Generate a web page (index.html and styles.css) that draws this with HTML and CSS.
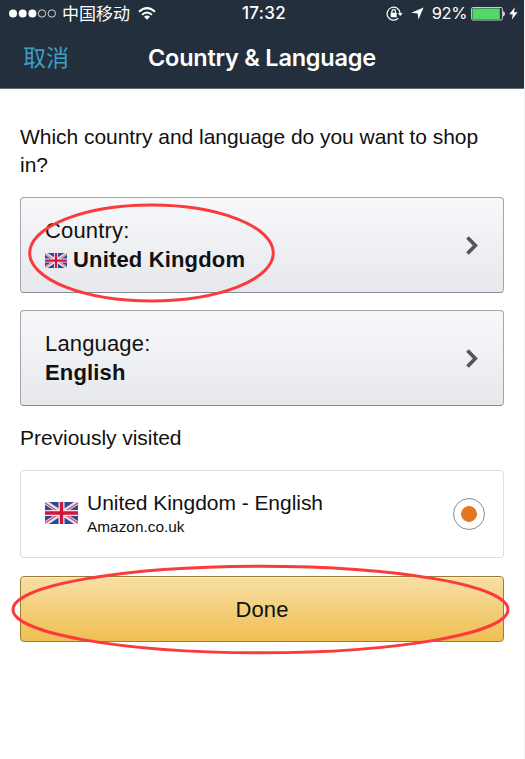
FILE: index.html
```html
<!DOCTYPE html>
<html lang="en">
<head>
<meta charset="utf-8">
<title>Country &amp; Language</title>
<link rel="stylesheet" href="styles.css">
</head>
<body>
<svg class="defs" width="0" height="0" aria-hidden="true">
  <symbol id="uk" viewBox="0 0 60 40" preserveAspectRatio="none">
    <path fill="#2b4a9b" d="M0 0h60v40H0z"/>
    <path stroke="#e9e2ee" stroke-width="8" d="M0 0l60 40M60 0L0 40"/>
    <path stroke="#dc5570" stroke-width="2.500" d="M0 1.500l30 20M60 38.500l-30-20M60 1.500l-30 20M0 38.500l30-20"/>
    <path stroke="#f3dfe6" stroke-width="11" d="M30 0v40M0 20h60"/>
    <path stroke="#d5143a" stroke-width="6" d="M30 0v40M0 20h60"/>
  </symbol>
</svg>
<div class="screen">
  <header class="header">
    <div class="status">
      <div class="status-left">
        <svg class="signal" width="48" height="12" viewBox="0 0 48 12"><g fill="#fff"><circle cx="4" cy="5.500" r="4"/><circle cx="13.700" cy="5.500" r="4"/><circle cx="23.400" cy="5.500" r="4"/></g><g fill="none" stroke="#fff" stroke-width=".8"><circle cx="33" cy="5.500" r="3.700"/><circle cx="42.800" cy="5.500" r="3.700"/></g></svg>
        <span class="carrier">中国移动</span>
        <svg class="wifi" width="18" height="14" viewBox="0 0 18 14"><g fill="none" stroke="#fff" stroke-width="2"><path d="M1 4.700Q9-2.500 17 4.700M4 7.800Q9 3.300 14 7.800"/></g><path fill="#fff" d="M6 9.700Q9 7.300 12 9.700L9 12.700z"/></svg>
      </div>
      <span class="time">17:32</span>
      <div class="status-right">
        <svg class="lock" width="17" height="16" viewBox="0 0 17 16"><path fill="none" stroke="#fff" stroke-width="1.200" d="M14.100 7.200A6.500 6.500 0 1 0 12.300 12.200"/><path fill="#fff" d="M11.700 7h5L14.200 10zM4.700 6.700h6v4.500h-6z"/><path fill="none" stroke="#fff" stroke-width="1.200" d="M5.900 7V5.500a1.800 1.800 0 0 1 3.600 0V7"/></svg>
        <svg class="arrow" width="13" height="13" viewBox="0 0 13 13"><path fill="#fff" d="M12.600.4L7.400 12.600 6.700 6.500.3 5.700z"/></svg>
        <span class="percent">92%</span>
        <svg class="battery" width="34" height="14" viewBox="0 0 34 14"><rect x=".6" y=".5" width="30.800" height="12.500" rx="1.200" fill="none" stroke="#c9cdd3" stroke-width="1"/><path fill="#53d769" d="M1.500 1.400h27.300v10.600H1.500z"/><path fill="#fff" d="M32.200 4.100q1.600.4 1.600 2.700t-1.600 2.700z"/></svg>
        <svg class="bolt" width="9" height="13" viewBox="0 0 9 13"><path fill="#fff" d="M5.800.2L.3 7.200h3.500L2.800 12.800 8.600 5.300H5z"/></svg>
      </div>
    </div>
    <nav class="nav"><span class="cancel">取消</span><h1 class="title">Country &amp; Language</h1></nav>
  </header>
  <main class="content">
    <p class="question">Which country and language do you want to shop in?</p>
    <div class="picker">
      <div>
        <div class="label">Country:</div>
        <div class="value"><svg class="flag-small" width="22" height="15"><use href="#uk"/></svg><span class="country">United Kingdom</span></div>
      </div>
      <svg class="chevron" width="12" height="20" viewBox="0 0 12 20"><path fill="none" stroke="#555" stroke-width="3.700" d="M1.500 2.500l7.800 8-7.800 8"/></svg>
      <svg class="mark mark-country" width="248" height="102"><ellipse cx="124.500" cy="51" rx="121.800" ry="48"/></svg>
    </div>
    <div class="picker">
      <div>
        <div class="label">Language:</div>
        <div class="value"><span class="language">English</span></div>
      </div>
      <svg class="chevron" width="12" height="20" viewBox="0 0 12 20"><path fill="none" stroke="#555" stroke-width="3.700" d="M1.500 2.500l7.800 8-7.800 8"/></svg>
    </div>
    <h2 class="section">Previously visited</h2>
    <div class="visited">
      <svg class="flag-large" width="33" height="22"><use href="#uk"/></svg>
      <div class="store">
        <div class="store-name">United Kingdom - English</div>
        <div class="store-url">Amazon.co.uk</div>
      </div>
      <span class="radio"></span>
    </div>
    <div class="done"><span>Done</span>
      <svg class="mark mark-done" width="500" height="92"><ellipse cx="249.500" cy="45.500" rx="247.500" ry="43.300"/></svg>
    </div>
  </main>
</div>
</body>
</html>
```
FILE: styles.css
```css
* { box-sizing: border-box; }
body {
  margin: 0;
  background: #fff;
  color: #111;
  font-family: "Liberation Sans", Arial, sans-serif;
}
.defs { position: absolute; }
.screen { width: 525px; height: 759px; border-right: 1px solid #f0f2f7; overflow: hidden; }
svg { display: block; flex: none; }

.header { height: 89px; background: #242f3d; border-bottom: 1px solid #66707d; color: #fff; }
.status {
  height: 27px;
  display: grid;
  grid-template-columns: 1fr auto 1fr;
  align-items: center;
  padding: 0 6px 0 9px;
  font: 17px/27px Inter, "Noto Sans CJK SC", sans-serif;
}
.status-left, .status-right { display: flex; align-items: center; }
.status-right { justify-content: flex-end; }
.carrier { margin-left: 5px; padding-bottom: 2px; font: 400 17px/25px "Noto Sans CJK SC", sans-serif; }
.wifi { margin-left: 8px; }
.time { padding-left: 1px; font-weight: 500; font-size: 17px; letter-spacing: .3px; }
.lock { margin-right: -1px; }
.arrow { margin-left: 9px; }
.percent { margin-left: 8px; font-size: 16.500px; letter-spacing: -.4px; }
.battery { margin-left: 4px; }
.bolt { margin-left: 4px; }
.nav {
  height: 61px;
  display: grid;
  grid-template-columns: 125px 1fr;
  align-items: center;
  padding-left: 23px;
}
.cancel { padding-bottom: 3px; color: #419cc4; font: 400 23px/33px "Noto Sans CJK SC", sans-serif; }
.title { margin: 0; font: 600 23.500px/36px Inter, sans-serif; letter-spacing: -.23px; white-space: nowrap; }

.content { padding: 34px 20px 0; }
.question { margin: 0 0 18px; font-size: 21px; line-height: 28px; letter-spacing: -.04px; }
.picker {
  position: relative;
  height: 96px;
  margin-bottom: 17px;
  padding: 0 25px 0 24px;
  display: flex;
  align-items: center;
  justify-content: space-between;
  border: 1px solid #a3a6ad;
  border-bottom-color: #868b95;
  border-radius: 4px;
  background: linear-gradient(#f7f8fa, #e7e8ec);
  font-size: 22px;
  line-height: 29px;
  letter-spacing: .16px;
}
.value { display: flex; align-items: center; font-weight: bold; }
.flag-small { margin: 1px 6px 0 0; }
.mark { position: absolute; fill: none; stroke: #fb3a3c; stroke-width: 3px; }
.mark-country { left: 6px; top: 4px; }
.section { margin: 0 0 17px; font-size: 21px; font-weight: normal; line-height: 30px; letter-spacing: -.04px; }
.visited {
  height: 88px;
  margin-bottom: 18px;
  padding: 0 18px 0 24px;
  display: flex;
  align-items: center;
  border: 1px solid #ddd;
  border-radius: 4px;
}
.flag-large { margin-bottom: 2px; }
.store { margin: 2px 0 0 9px; }
.store-name { font-size: 21px; line-height: 24px; letter-spacing: -.04px; }
.store-url { font-size: 15.400px; line-height: 24px; }
.radio {
  width: 32px;
  height: 32px;
  margin-left: auto;
  border: 1px solid #8c8c8c;
  border-radius: 50%;
  background: radial-gradient(circle, #e47620 7.500px, #fff 8.200px);
}
.done {
  position: relative;
  height: 66px;
  padding-top: 1px;
  display: flex;
  align-items: center;
  justify-content: center;
  border: 1px solid #9b7c35;
  border-radius: 4px;
  background: linear-gradient(#f7dfa5, #efbf52);
  box-shadow: inset 0 1px #faedcc;
  font-size: 22px;
  letter-spacing: .16px;
}
.mark-done { left: -10px; top: -13px; }
```
